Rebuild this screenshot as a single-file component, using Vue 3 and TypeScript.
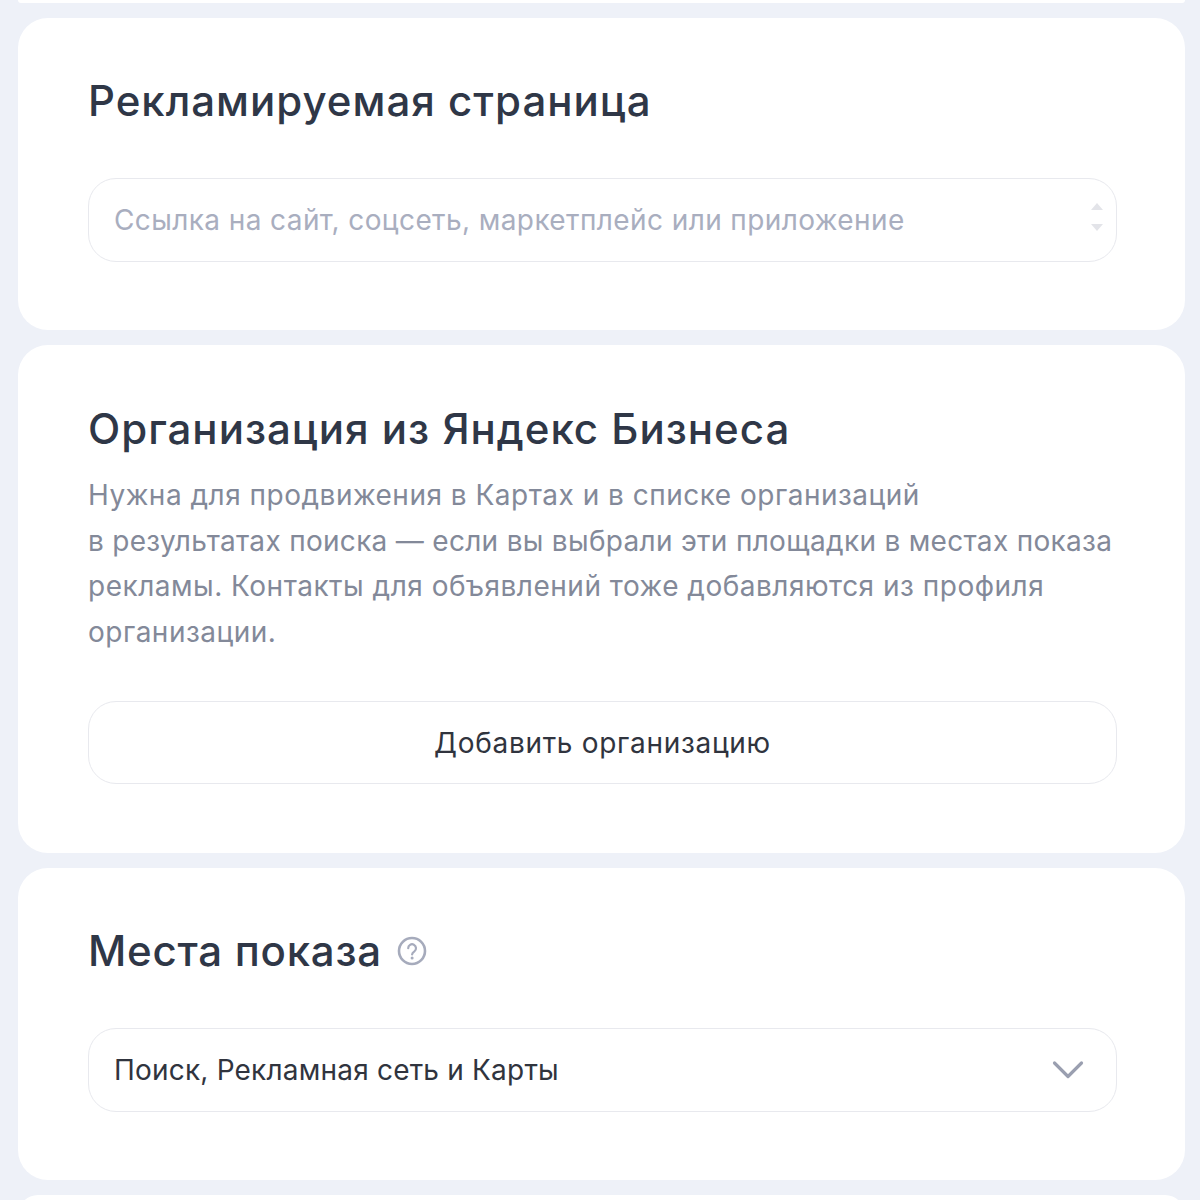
<script setup lang="ts">
const description = [
  'Нужна для продвижения в Картах и в списке организаций',
  'в результатах поиска — если вы выбрали эти площадки в местах показа',
  'рекламы. Контакты для объявлений тоже добавляются из профиля',
  'организации.',
]
</script>

<template>
  <main class="page">
    <div class="stub stub-top"></div>

    <section class="card card-page">
      <h2 class="title">Рекламируемая страница</h2>
      <div class="field">
        <input class="input" type="text" placeholder="Ссылка на сайт, соцсеть, маркетплейс или приложение" />
        <span class="spinner" aria-hidden="true">
          <svg width="14" height="8" viewBox="0 0 14 8"><path d="M7 0l6 7H1z" fill="#e3e4e9" /></svg>
          <svg width="14" height="8" viewBox="0 0 14 8"><path d="M7 8L1 1h12z" fill="#e3e4e9" /></svg>
        </span>
      </div>
    </section>

    <section class="card card-org">
      <h2 class="title">Организация из Яндекс Бизнеса</h2>
      <p class="desc">
        <span v-for="line in description" :key="line" class="desc-line">{{ line }}</span>
      </p>
      <button class="button" type="button">Добавить организацию</button>
    </section>

    <section class="card card-places">
      <h2 class="title title-help">
        Места показа
        <svg class="help" width="30" height="30" viewBox="0 0 30 30" fill="none">
          <circle cx="15" cy="15" r="13" stroke="#a6abbc" stroke-width="2.6" />
          <path d="M11.2 12.2a3.9 3.9 0 1 1 6.2 3.1c-1.5 1-2.3 1.8-2.3 3.2" stroke="#a6abbc" stroke-width="2.2" stroke-linecap="round" />
          <circle cx="15.1" cy="22" r="1.5" fill="#a6abbc" />
        </svg>
      </h2>
      <div class="select">
        <span>Поиск, Рекламная сеть и Карты</span>
        <svg class="chevron" width="32" height="20" viewBox="0 0 32 20" fill="none">
          <path d="M2.5 3L16 16.5 29.5 3" stroke="#9a9fb0" stroke-width="3.2" stroke-linecap="round" stroke-linejoin="round" />
        </svg>
      </div>
    </section>

    <div class="stub stub-bottom"></div>
  </main>
</template>

<style>
html, body { margin: 0; background: #eef1f8; }
</style>

<style scoped>
.page {
  box-sizing: border-box;
  width: 1200px;
  height: 1200px;
  overflow: hidden;
  padding: 0 15px 0 18px;
  display: flex;
  flex-direction: column;
  gap: 15px;
  background: #eef1f8;
  font-family: Inter, "Noto Sans", sans-serif;
}
.stub { flex: none; background: #fff; }
.stub-top { height: 3px; border-radius: 0 0 30px 30px; }
.stub-bottom { height: 20px; border-radius: 30px 30px 0 0; }
.card {
  flex: none;
  box-sizing: border-box;
  background: #fff;
  border-radius: 30px;
  padding: 0 68px 0 70px;
}
.card-page { height: 312px; padding-top: 56px; }
.card-org { height: 508px; padding-top: 57px; }
.card-places { height: 312px; padding-top: 56px; }
.title {
  margin: 0;
  height: 54px;
  line-height: 54px;
  font-size: 42px;
  font-weight: 550;
  letter-spacing: 1px;
  color: #2f3747;
  white-space: nowrap;
}
.title-help { display: flex; align-items: center; gap: 15px; letter-spacing: 0.75px; }
.help { flex: none; }
.field { position: relative; margin-top: 50px; }
.input {
  display: block;
  box-sizing: border-box;
  width: 100%;
  height: 84px;
  padding: 0 60px 0 25px;
  border: 1.5px solid #e8e9ee;
  border-radius: 28px;
  outline: none;
  background: #fff;
  font: 400 28px Inter, "Noto Sans", sans-serif;
  letter-spacing: 0.4px;
  color: #2f3747;
}
.input::placeholder { color: #a9aebf; opacity: 1; }
.spinner {
  position: absolute;
  right: 13px;
  top: 25px;
  display: flex;
  flex-direction: column;
  gap: 12px;
}
.spinner svg { display: block; }
.desc {
  margin: 17px 0 0;
  font-size: 28px;
  line-height: 45.6px;
  font-weight: 400;
  letter-spacing: 0.5px;
  color: #838999;
}
.desc-line { display: block; white-space: nowrap; }
.desc-line:nth-child(2) { letter-spacing: 0.3px; }
.button {
  display: block;
  box-sizing: border-box;
  width: 100%;
  height: 83px;
  margin-top: 46px;
  border: 1.5px solid #e8e9ee;
  border-radius: 28px;
  background: #fff;
  font: 400 28px Inter, "Noto Sans", sans-serif;
  letter-spacing: 0.7px;
  color: #30343e;
}
.select {
  box-sizing: border-box;
  margin-top: 50px;
  height: 84px;
  padding: 0 32px 0 25px;
  display: flex;
  align-items: center;
  justify-content: space-between;
  border: 1.5px solid #e8e9ee;
  border-radius: 28px;
  font-size: 28px;
  letter-spacing: 0.2px;
  color: #30343e;
}
.chevron { flex: none; }
</style>
